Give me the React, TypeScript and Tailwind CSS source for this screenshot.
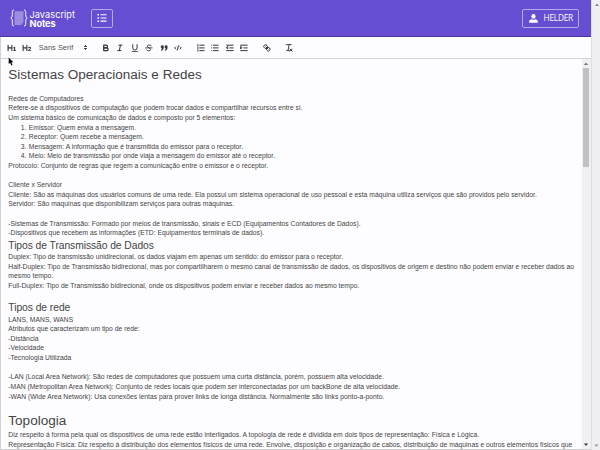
import React, { useLayoutEffect, useRef, useState } from "react";

type Kind = "p" | "h1" | "h2" | "li" | "blank";
interface Line {
  kind: Kind;
  text?: string;
  width?: number;
  marker?: string;
}

const lines: Line[] = [
  { kind: "h1", text: "Sistemas Operacionais e Redes", width: 193.5 },
  { kind: "blank" },
  { kind: "p", text: "Redes de Computadores", width: 75.3 },
  { kind: "p", text: "Refere-se a dispositivos de computação que podem trocar dados e compartilhar recursos entre si.", width: 294 },
  { kind: "p", text: "Um sistema básico de comunicação de dados é composto por 5 elementos:", width: 227 },
  { kind: "li", marker: "1.", text: "Emissor: Quem envia a mensagem.", width: 107.2 },
  { kind: "li", marker: "2.", text: "Receptor: Quem recebe a mensagem.", width: 115 },
  { kind: "li", marker: "3.", text: "Mensagem: A informação que é transmitida do emissor para o receptor.", width: 214.3 },
  { kind: "li", marker: "4.", text: "Meio: Meio de transmissão por onde viaja a mensagem do emissor até o receptor.", width: 246.3 },
  { kind: "p", text: "Protocolo: Conjunto de regras que regem a comunicação entre o emissor e o receptor.", width: 259.8 },
  { kind: "blank" },
  { kind: "p", text: "Cliente x Servidor", width: 53.8 },
  { kind: "p", text: "Cliente: São as máquinas dos usuários comuns de uma rede. Ela possui um sistema operacional de uso pessoal e esta máquina utiliza serviços que são providos pelo servidor.", width: 528.5 },
  { kind: "p", text: "Servidor: São maquinas que disponibilizam serviços para outras máquinas.", width: 225.8 },
  { kind: "blank" },
  { kind: "p", text: "-Sistemas de Transmissão: Formado por meios de transmissão, sinais e ECD (Equipamentos Contadores de Dados).", width: 352.3 },
  { kind: "p", text: "-Dispositivos que recebem as informações (ETD: Equipamentos terminais de dados).", width: 255.8 },
  { kind: "h2", text: "Tipos de Transmissão de Dados", width: 145.5 },
  { kind: "p", text: "Duplex: Tipo de transmissão unidirecional, os dados viajam em apenas um sentido: do emissor para o receptor.", width: 334.8 },
  { kind: "p", text: "Half-Duplex: Tipo de Transmissão bidirecional, mas por compartilharem o mesmo canal de transmissão de dados, os dispositivos de origem e destino não podem enviar e receber dados ao", width: 565.7 },
  { kind: "p", text: "mesmo tempo.", width: 45 },
  { kind: "p", text: "Full-Duplex: Tipo de Transmissão bidirecional, onde os dispositivos podem enviar e receber dados ao mesmo tempo.", width: 351 },
  { kind: "blank" },
  { kind: "h2", text: "Tipos de rede", width: 62 },
  { kind: "p", text: "LANS, MANS, WANS", width: 65 },
  { kind: "p", text: "Atributos que caracterizam um tipo de rede:", width: 131.3 },
  { kind: "p", text: "-Distância", width: 30.3 },
  { kind: "p", text: "-Velocidade", width: 35.7 },
  { kind: "p", text: "-Tecnologia Utilizada", width: 63 },
  { kind: "blank" },
  { kind: "p", text: "-LAN (Local Area Network): São redes de computadores que possuem uma curta distância, porém, possuem alta velocidade.", width: 375.5 },
  { kind: "p", text: "-MAN (Metropolitan Area Network): Conjunto de redes locais que podem ser interconectadas por um backBone de alta velocidade.", width: 391.9 },
  { kind: "p", text: "-WAN (Wide Area Network): Usa conexões lentas para prover links de longa distância. Normalmente são links ponto-a-ponto.", width: 376 },
  { kind: "blank" },
  { kind: "h1", text: "Topologia", width: 58 },
  { kind: "p", text: "Diz respeito á forma pela qual os dispositivos de uma rede estão interligados. A topologia de rede é dividida em dois tipos de representação: Física e Lógica.", width: 470.8 },
  { kind: "p", text: "Representação Física: Diz respeito á distribuição dos elementos físicos de uma rede. Envolve, disposição e organização de cabos, distribuição de máquinas e outros elementos físicos que", width: 564 },
];

/* Single line of text whose tracking is tuned so that it spans a given measure. */
function Fit({ text, width }: { text: string; width: number }) {
  const ref = useRef<HTMLSpanElement>(null);
  const [spacing, setSpacing] = useState(0);
  useLayoutEffect(() => {
    if (ref.current) {
      setSpacing((width - ref.current.getBoundingClientRect().width) / text.length);
    }
  }, [text, width]);
  return (
    <span ref={ref} className="whitespace-nowrap" style={{ letterSpacing: `${spacing}px` }}>
      {text}
    </span>
  );
}

function Row({ line }: { line: Line }) {
  const { kind, text = "", width = 0, marker } = line;
  if (kind === "blank") return <div className="h-[9.61px]" />;
  if (kind === "h1")
    return (
      <h1 className="h-[19.2px] text-[13.52px] leading-[20px]">
        <Fit text={text} width={width} />
      </h1>
    );
  if (kind === "h2")
    return (
      <h2 className="h-[14.4px] text-[10.3px] leading-[15.6px]">
        <Fit text={text} width={width} />
      </h2>
    );
  if (kind === "li")
    return (
      <div className="flex h-[9.61px] pl-[12.5px] leading-[9.61px]">
        <span className="w-[8px]">{marker}</span>
        <Fit text={text} width={width} />
      </div>
    );
  return (
    <p className="h-[9.61px] leading-[9.61px]">
      <Fit text={text} width={width} />
    </p>
  );
}

function Tool({ children, fill }: { children: React.ReactNode; fill?: boolean }) {
  return (
    <button className="flex w-[14.56px] shrink-0 justify-center">
      <svg
        viewBox="0 0 18 18"
        className={
          fill
            ? "size-[9.8px] fill-[#333]"
            : "size-[9.8px] fill-none stroke-[#333] stroke-[1.8] [stroke-linecap:round] [stroke-linejoin:round]"
        }
      >
        {children}
      </svg>
    </button>
  );
}

function Toolbar() {
  return (
    <div className="flex h-[22px] shrink-0 items-center border-b border-[#d4d3d8] pl-[3.8px]">
      <Tool fill>
        <path d="M10,4V14a1,1,0,0,1-2,0V10H3v4a1,1,0,0,1-2,0V4A1,1,0,0,1,3,4V8H8V4a1,1,0,0,1,2,0Zm6.06787,9.209H14.98975V7.59863a.54085.54085,0,0,0-.605-.60547h-.62744a1.01119,1.01119,0,0,0-.748.29688L11.645,8.56641a.5435.5435,0,0,0-.022.8584l.28613.30762a.53861.53861,0,0,0,.84717.0332l.09912-.08789a1.2137,1.2137,0,0,0,.2417-.35254h.02246s-.01123.30859-.01123.60547V13.209H12.041a.54085.54085,0,0,0-.605.60547v.43945a.54085.54085,0,0,0,.605.60547h4.02686a.54085.54085,0,0,0,.605-.60547v-.43945A.54085.54085,0,0,0,16.06787,13.209Z" />
      </Tool>
      <Tool fill>
        <path d="M16.73975,13.81445v.43945a.54085.54085,0,0,1-.605.60547H11.855a.58392.58392,0,0,1-.64893-.60547V14.0127c0-2.90527,3.39941-3.42187,3.39941-4.55469a.77675.77675,0,0,0-.84717-.78125,1.17684,1.17684,0,0,0-.83594.38477c-.2749.26367-.561.374-.85791.13184l-.4292-.34082c-.30811-.24219-.38525-.51758-.1543-.81445a2.97155,2.97155,0,0,1,2.45361-1.17676,2.45393,2.45393,0,0,1,2.68408,2.40918c0,2.45312-3.1792,2.92676-3.27832,3.93848h2.79443A.54085.54085,0,0,1,16.73975,13.81445ZM9,3A.99974.99974,0,0,0,8,4V8H3V4A1,1,0,0,0,1,4V14a1,1,0,0,0,2,0V10H8v4a1,1,0,0,0,2,0V4A.99974.99974,0,0,0,9,3Z" />
      </Tool>
      <div className="ml-[4.9px] flex w-[51px] items-center justify-between pt-px text-[7.4px] text-[#555]">
        <Fit text="Sans Serif" width={34.5} />
        <svg viewBox="0 0 18 18" className="size-[9px] fill-[#333] stroke-[#333] [stroke-linejoin:round]">
          <polygon points="7 11 9 13 11 11 7 11" strokeWidth="2" />
          <polygon points="7 7 9 5 11 7 7 7" strokeWidth="2" />
        </svg>
      </div>
      <div className="ml-[8.6px] flex">
        <Tool>
          <path d="M5,4H9.5A2.5,2.5,0,0,1,12,6.5v0A2.5,2.5,0,0,1,9.5,9H5V4Z" strokeWidth="2.2" />
          <path d="M5,9h5.5A2.5,2.5,0,0,1,13,11.5v0A2.5,2.5,0,0,1,10.500,14H5V9Z" strokeWidth="2.2" />
        </Tool>
        <Tool>
          <path d="M7 4H13M5 14H11M8 14L10 4" />
        </Tool>
        <Tool>
          <path d="M5,3V9a4,4,0,0,0,4,4H9a4,4,0,0,0,4-4V3M4 16H14" />
        </Tool>
        <Tool>
          <path d="M3 9H15M13 5C11 3 6 3 6 6C6 8 12 9 12 12C12 15 7 15 5 13" strokeWidth="1.6" />
        </Tool>
        <Tool fill>
          <path d="M4 5H8V9C8 12 6 13 5 14L4 13C5 12 6 11 6 9H4ZM11 5H15V9C15 12 13 13 12 14L11 13C12 12 13 11 13 9H11Z" stroke="#333" />
        </Tool>
        <Tool>
          <path d="M5 7L3 9L5 11M13 7L15 9L13 11M10 5L8 13" />
        </Tool>
      </div>
      <div className="ml-[7.8px] flex">
        <Tool>
          <path d="M7 4H15M7 9H15M7 14H15" />
          <path d="M2.500 2.500L3.500 2V5.500M2.500 5.500H4.500M2.500 8C4 7 5 8 4 9L2.500 10.500H4.500M2.500 12.500H4.500L3.500 14C5 14 4.500 16 2.500 15.500" strokeWidth="1" />
        </Tool>
        <Tool>
          <path d="M6 4H15M6 9H15M6 14H15M3 4H3M3 9H3M3 14H3" />
        </Tool>
        <Tool>
          <path d="M3 14H15M3 4H15M9 9H15M5 7V11L3 9Z" />
        </Tool>
        <Tool>
          <path d="M3 14H15M3 4H15M9 9H15M3 7V11L5 9Z" />
        </Tool>
      </div>
      <div className="ml-[7.8px] flex">
        <Tool>
          <path d="M7 7L11 11M8.900,4.577a3.476,3.476,0,0,1,.36,4.679A3.476,3.476,0,0,1,4.577,8.900C3.185,7.500,2.035,6.400,4.217,4.217S7.500,3.185,8.900,4.577ZM13.423,9.100a3.476,3.476,0,0,0-4.679-.36,3.476,3.476,0,0,0,.36,4.679c1.392,1.392,2.500,2.542,4.679.36S14.815,10.500,13.423,9.100Z" />
        </Tool>
      </div>
      <div className="ml-[7.8px] flex">
        <Tool>
          <path d="M4 3H13M5 14H10M9.400 3L7.500 13M11 11L15 15M15 11L11 15" strokeWidth="1.7" />
        </Tool>
      </div>
    </div>
  );
}

function Logo() {
  return (
    <div className="flex items-center">
      <svg viewBox="0 0 18 20" className="h-[20px] w-[18px] fill-none stroke-white">
        <path d="M4 2C1.800 2 2.300 4 2.300 6.500C2.300 9 1.900 9.500.7 10C1.900 10.500 2.300 11 2.300 13.500C2.300 16 1.800 18 4 18M14 2C16.200 2 15.700 4 15.700 6.500C15.700 9 16.100 9.500 17.300 10C16.100 10.500 15.700 11 15.700 13.500C15.700 16 16.200 18 14 18" />
        <path d="M4.500 3.500H13.500V14.500L11.500 17H4.500Z" fill="#fff" fillOpacity=".2" stroke="none" />
        <path d="M4.500 4H13.500M4.500 6H13.500M4.500 8H13.500M4.500 10H13.500M4.500 12H13.500M4.500 14H13M4.500 16H11.500" strokeWidth=".8" strokeOpacity=".5" />
      </svg>
      <div className="ml-[1.500px] flex flex-col pt-[1.600px] font-['Inter',sans-serif] text-[9.2px] text-white">
        <span className="flex h-[9px] items-center leading-none">
          <Fit text="Javascript" width={45.6} />
        </span>
        <b className="flex h-[9px] items-center font-bold leading-none">
          <Fit text="Notes" width={26} />
        </b>
      </div>
    </div>
  );
}

function Scrollbar() {
  return (
    <div className="flex w-[9px] shrink-0 flex-col items-center bg-[#f0eff1] pr-px">
      <svg viewBox="0 0 8 9" className="h-[9px] w-[8px] shrink-0 fill-[#777]">
        <path d="M4 3.500L6.200 6H1.800Z" />
      </svg>
      <div className="h-[99px] w-[6.500px] bg-[#c1c0c2]" />
      <svg viewBox="0 0 8 9" className="mt-auto h-[9px] w-[8px] shrink-0 fill-[#333]">
        <path d="M4 6L6 3.500H2Z" />
      </svg>
    </div>
  );
}

export default function App() {
  return (
    <div className="relative flex h-[450px] w-[600px] overflow-hidden bg-[#fdfcfe] font-['Liberation_Sans',Arial,sans-serif] text-[6.76px] text-[#444]">
      <div className="flex w-[591px] flex-col">
        <header className="flex h-[37px] shrink-0 items-center border-b border-[#4936a0] bg-[#664dd2] pl-[10px] pr-[12px]">
          <Logo />
          <button className="ml-[15.500px] flex h-[19px] w-[22px] items-center justify-center rounded-[2px] border border-[#b5a8ec]">
            <svg viewBox="0 0 10 8" className="h-[8px] w-[10px] fill-white">
              <path d="M.5 0H2V1.500H.5ZM3.500.2H9.500V1.300H3.500ZM.5 3.200H2V4.700H.5ZM3.500 3.400H9.500V4.500H3.500ZM.5 6.400H2V7.900H.5ZM3.500 6.600H9.500V7.700H3.500Z" />
            </svg>
          </button>
          <button className="ml-auto flex h-[19px] w-[57px] items-center rounded-[2px] border border-[#b5a8ec] pl-[6px] font-['Open_Sans',sans-serif] text-[8.3px] text-white">
            <svg viewBox="0 0 9 9" className="mr-[5.500px] h-[9px] w-[9px] fill-white">
              <ellipse cx="4.500" cy="2.400" rx="2.100" ry="2.400" />
              <path d="M.2 8.700V7.400C.2 6 1.500 5.400 2.800 5.200Q4.500 6.200 6.200 5.200C7.500 5.400 8.800 6 8.800 7.400V8.700Z" />
            </svg>
            <span className="flex pt-px">
              <Fit text="HELDER" width={29.5} />
            </span>
          </button>
        </header>
        <div className="flex min-h-0 flex-1 flex-col border-b border-l border-[#d0cfd4]">
          <Toolbar />
          <div className="flex min-h-0 flex-1">
            <article className="min-w-0 flex-1 overflow-hidden pl-[7.300px] pt-[5.900px]">
              {lines.map((line, i) => (
                <Row key={i} line={line} />
              ))}
            </article>
            <Scrollbar />
          </div>
        </div>
      </div>
      <aside className="flex w-[9px] flex-col items-center justify-between border-l border-[#dedde0] bg-[#f0eff1]">
        <svg viewBox="0 0 8 9" className="h-[9px] w-[8px] fill-[#888]">
          <path d="M5 3.500L7 6H3Z" />
        </svg>
        <svg viewBox="0 0 8 9" className="h-[9px] w-[8px] fill-[#999]">
          <path d="M4.500 6L6.500 3.500H2.500Z" />
        </svg>
      </aside>
      <svg viewBox="0 0 6 9" className="absolute left-[8px] top-[57px] h-[9px] w-[6px] fill-black">
        <path d="M.7.5V7L2.200 5.700L3.400 8.500L4.500 8L3.400 5.300H5.300Z" />
      </svg>
    </div>
  );
}
